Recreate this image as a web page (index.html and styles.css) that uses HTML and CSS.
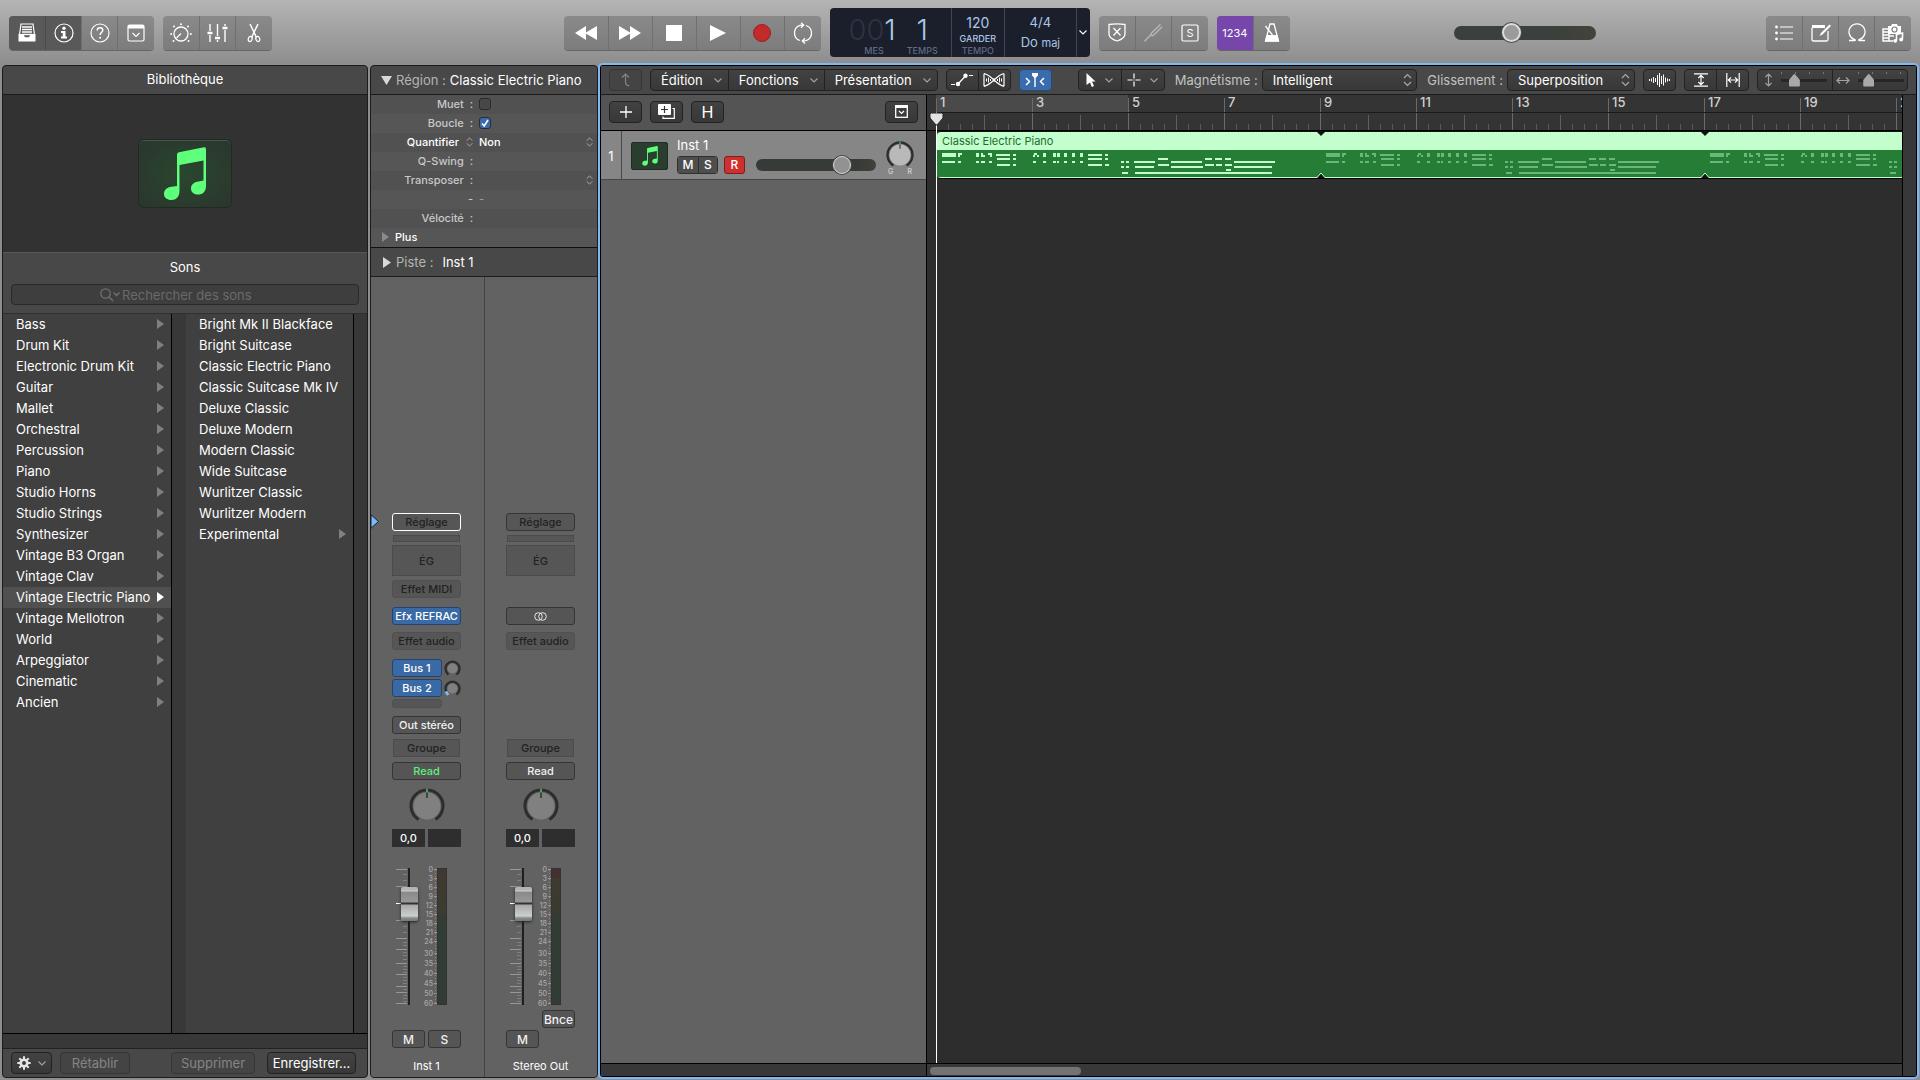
FILE: index.html
```html
<!DOCTYPE html>
<html lang="fr">
<head>
  <meta charset="UTF-8" />
  <meta name="viewport" content="width=device-width, initial-scale=1" />
  <title>Inst 1 – Pistes</title>
  <link rel="stylesheet" href="styles.css">
</head>
<body>

  <!-- shared shapes -->
  <svg class="defs" aria-hidden="true">
    <symbol id="chevron" viewBox="0 0 8 5"><path d="M.5.5 4 4 7.5.5" fill="none" stroke="currentColor" stroke-width="1.1"/></symbol>
    <symbol id="stepper" viewBox="0 0 7 10"><path d="M.7 3.7 3.5.9l2.8 2.8M.7 6.3l2.8 2.8 2.8-2.8" fill="none" stroke="currentColor"/></symbol>
    <symbol id="arrow" viewBox="0 0 7 10"><path d="M0 0 7 5 0 10z" fill="currentColor"/></symbol>
    <symbol id="note" viewBox="0 0 42 54">
      <path d="M13 7.500Q13 5.500 15 5.200L40 .3Q42 0 42 2V39C42 45 38.500 47.500 34 47.500 29.500 47.500 27 45 27 41.500 27 37.500 30 35 34.500 34.500L39.500 33.500V13.500L15.500 18V44C15.500 50 12 53 7.500 53 3 53 0 50.500 0 47 0 43 3 40.300 7.500 39.800L13 39z" fill="#5dff7b"/>
    </symbol>
    <symbol id="pan" viewBox="0 0 36 36">
      <path d="M9.500 31.500A16 16 0 1 1 26.500 31.500" fill="none" stroke="#2d2d2d" stroke-width="3"/>
      <circle cx="18" cy="18" r="13.500" fill="var(--cap)"/>
      <path d="M18 .5v4" stroke="#4fc565" stroke-width="1.500"/><path d="M18 4.500V10" stroke="#1c1c1c" stroke-width="1.200"/>
    </symbol>
    <symbol id="send" viewBox="0 0 17 17">
      <path d="M4.500 14.400A7 7 0 1 1 12.500 14.400" fill="none" stroke="#2d2d2d" stroke-width="2.400"/>
      <circle cx="8.500" cy="8.500" r="5" fill="#808080"/>
    </symbol>
    <symbol id="fader-scale" viewBox="0 0 69 138">
      <g stroke="#979797">
        <path d="M4 1.500h11M4 18.500h11M4 52.500h11M4 70.500h11M4 81.500h11M4 95.500h11M4 106.500h11M4 118.500h11M4 124.500h11M4 135.500h11"/>
        <path d="M11 6.500h4M11 12.500h4M11 24.500h4M11 30.500h4M11 42.500h4M11 47.500h4M11 58.500h4M11 64.500h4M11 74.500h4M11 77.500h4M11 84.500h4M11 87.500h4M11 91.500h4M11 98.500h4M11 101.500h4M11 104.500h4M11 109.500h4M11 112.500h4M11 115.500h4M11 121.500h4M11 127.500h4M11 130.500h4M11 133.500h4" stroke="#808080"/>
        <path d="M42 1.500h3M42 10.500h3M42 19.500h3M42 28.500h3M42 37.500h3M42 46.500h3M42 55.500h3M42 64.500h3M42 73.500h3M42 85.500h3M42 95.500h3M42 105.500h3M42 115.500h3M42 125.500h3M42 135.500h3"/>
        <path d="M43.500 2V136" stroke-dasharray="1 2" stroke="#8a8a8a"/>
      </g>
      <path d="M4 35.500h6" stroke="#fff"/>
      <rect x="16" width="2" height="137" fill="#1f1f1f"/>
    </symbol>
    <symbol id="midi" viewBox="0 0 384 27" overflow="visible">
      <path d="M5 3h14v4H5zM21 3h4v2h-2v2h-2zM5 11h13v2H5zM21 11h3v2h-3z
        M39 3h3v4h-3zM44 3h2v2h2v2h-4zM51 3h4v4h-2V5h-2zM39 11h3v2h-3zM44 11h4v2h-4zM52 11h3v2h-3z
        M59 4h14v2H59zM76 4h3v2h-3zM60 8h13v2H60zM76 8h3v2h-3zM60 14h13v2H60zM76 14h3v2h-3z
        M97 3h3v2h2v2h-2V5h-2v2h-2V5h1zM106 3h3v4h-3zM96 11h3v2h-3zM106 11h3v2h-3z
        M116 3h3v4h-3zM120 3h3v4h-3zM127 3h3v4h-3zM135 3h3v4h-3zM143 3h3v4h-3z
        M116 11h3v2h-3zM120 11h2v2h-2zM127 11h3v2h-3zM135 11h3v2h-3zM143 11h3v2h-3z
        M151 4h14v2h-14zM168 4h3v2h-3zM151 8h14v2h-14zM168 8h3v2h-3zM151 14h14v2h-14zM168 14h4v2h-4z
        M184 11h3v2h-3zM189 11h3v2h-3zM184 16h3v2h-3zM189 16h3v2h-3zM185 22h6v2h-6z
        M197 11h21v2h-21zM198 16h19v2h-19zM221 8h10v2h-10zM221 14h11v2h-11zM234 11h31v2h-31zM234 16h32v2h-32z
        M198 22h137v2H198zM268 8h7v2h-7zM278 8h7v2h-7zM288 8h6v2h-6zM268 14h9v2h-9zM279 14h6v2h-6zM288 14h7v2h-7z
        M289 19h5v2h-5zM297 11h41v2h-41zM297 16h38v2h-38z" fill="currentColor"/>
    </symbol>
  </svg>

  <header class="control-bar">
    <div class="group">
      <button class="on" aria-label="Bibliothèque"><svg width="18" height="20" viewBox="0 0 18 20"><path d="M3 1h12l1.500 11H13l-1 3H6l-1-3H1.500z" fill="none" stroke="#fff" stroke-width="1.200"/><path d="M4 4h10M4 6.500h10M4 9h10M4 11.500h10" stroke="#fff" stroke-width="1.300"/><path d="M.5 11h4.800l1.700 3.500h4L12.700 11h4.800v7.500h-17z" fill="#fff"/></svg></button>
      <button class="on" aria-label="Informations"><svg width="20" height="20" viewBox="0 0 20 20"><circle cx="10" cy="10" r="9" fill="none" stroke="#fff" stroke-width="1.200"/><circle cx="10" cy="5.200" r="1.700" fill="#fff"/><path d="M7 8h4.500v5.500H13v2H7v-2h1.700V10H7z" fill="#fff"/></svg></button>
      <button aria-label="Aide"><svg width="20" height="20" viewBox="0 0 20 20"><circle cx="10" cy="10" r="9" fill="none" stroke="#fff" stroke-width="1.200"/><path d="M7.200 7.500c0-1.800 1.300-2.700 2.800-2.700s2.800.9 2.800 2.500c0 2-2.700 2.200-2.700 4.700" fill="none" stroke="#fff" stroke-width="1.400"/><circle cx="10.100" cy="14.700" r="1" fill="#fff"/></svg></button>
      <button aria-label="Barre d’outils"><svg width="18" height="18" viewBox="0 0 18 18"><rect x="1" y="1" width="16" height="16" rx="1.500" fill="none" stroke="#fff" stroke-width="1.200"/><path d="M1 1h16v3.500H1z" fill="#fff"/><path d="m5.500 9 3.500 3.500L12.500 9" fill="none" stroke="#fff" stroke-width="1.200"/></svg></button>
    </div>
    <div class="group">
      <button aria-label="Smart Controls"><svg width="22" height="20" viewBox="0 0 22 20"><circle cx="11" cy="11" r="7" fill="none" stroke="#fff" stroke-width="1.300"/><path d="m6.500 15 4.500-4.500" stroke="#fff" stroke-width="1.300"/><g fill="#fff"><circle cx="11" cy="1.200" r="1"/><circle cx="4" cy="3.500" r="1"/><circle cx="18" cy="3.500" r="1"/><circle cx="1.200" cy="11" r="1"/><circle cx="20.800" cy="11" r="1"/><circle cx="3.500" cy="18" r="1"/><circle cx="18.500" cy="18" r="1"/></g></svg></button>
      <button aria-label="Table de mixage"><svg width="21" height="20" viewBox="0 0 21 20"><path d="M3 1v7M3 12v7M10.500 1v12M10.500 17v2M18 1v2M18 7v12" stroke="#fff" stroke-width="1.400"/><path d="M.5 10h5M8 15h5M15.500 5h5" stroke="#fff" stroke-width="2.400"/></svg></button>
      <button aria-label="Éditeurs"><svg width="14" height="20" viewBox="0 0 14 20"><path d="M3 1l6.500 13.500M11 1 4.500 14.500" stroke="#fff" stroke-width="1.500"/><ellipse cx="3.200" cy="16" rx="1.900" ry="2.600" fill="none" stroke="#fff" stroke-width="1.300" transform="rotate(20 3.200 16)"/><ellipse cx="10.800" cy="16" rx="1.900" ry="2.600" fill="none" stroke="#fff" stroke-width="1.300" transform="rotate(-20 10.800 16)"/></svg></button>
    </div>

    <span class="space-wide"></span>

    <div class="group transport">
      <button aria-label="Retour rapide"><svg width="22" height="14" viewBox="0 0 22 14"><path d="M11 0v14L0 7zM22 0v14L10 7z" fill="#fff"/></svg></button>
      <button aria-label="Avance rapide"><svg width="22" height="14" viewBox="0 0 22 14"><path d="M0 0v14l12-7zM11 0v14l11-7z" fill="#fff"/></svg></button>
      <button aria-label="Arrêt"><svg width="16" height="16"><rect width="16" height="16" fill="#fff"/></svg></button>
      <button aria-label="Lecture"><svg width="16" height="16" viewBox="0 0 16 16"><path d="M0 0v16l16-8z" fill="#fff"/></svg></button>
      <button aria-label="Enregistrement"><svg width="18" height="18"><circle cx="9" cy="9" r="8.500" fill="#c22a2b" stroke="#9d2021"/></svg></button>
      <button aria-label="Boucle"><svg width="22" height="22" viewBox="0 0 22 22"><path d="M8 18.500A8 8 0 0 1 8 3.300l3.500-.3M14 3.500A8 8 0 0 1 14 18.700l-3.500.3M9 .7 11.700 3 9 5.700M13 16.300 10.300 19l2.700 2.500" fill="none" stroke="#fff" stroke-width="1.300"/></svg></button>
    </div>

    <div class="lcd">
      <div class="lcd-position">
        <div class="lcd-cell"><b><i>00</i>1</b><small>MES</small></div>
        <div class="lcd-cell"><b>1</b><small>TEMPS</small></div>
      </div>
      <div class="lcd-tempo"><span>120</span><em>GARDER</em><small>TEMPO</small></div>
      <div class="lcd-sign"><span>4/4</span><span>Do <em>maj</em></span></div>
      <button class="lcd-menu" aria-label="Affichage"><svg width="8" height="5"><use href="#chevron"/></svg></button>
    </div>

    <div class="group">
      <button aria-label="Remplacer"><svg width="18" height="19" viewBox="0 0 18 19"><path d="M1 1.500Q9 .3 17 1.500V11q0 4.500-8 7-8-2.500-8-7z" fill="none" stroke="#fff" stroke-width="1.300"/><path d="m5.500 5 7 7.500M12.500 5l-7 7.500" stroke="#fff" stroke-width="1.300"/></svg></button>
      <button class="dim" aria-label="Accordeur"><svg width="20" height="20" viewBox="0 0 20 20"><path d="m1.500 18.500 6.500-7M17.500 1.500 9.500 9q-2.500 2.500-1 3.500t3-1.300L19 4" fill="none" stroke="#fff" stroke-width="1.500"/></svg></button>
      <button aria-label="Solo"><svg width="18" height="18" viewBox="0 0 18 18"><rect x="1" y="1" width="16" height="16" rx="1.500" fill="none" stroke="#fff" stroke-width="1.200"/><text x="9" y="13" text-anchor="middle" fill="#fff" font-size="11">S</text></svg></button>
    </div>
    <div class="group">
      <button class="count-in">1234</button>
      <button aria-label="Métronome"><svg width="16" height="19" viewBox="0 0 16 19"><path d="M6 1h4l4.500 17h-13z" fill="none" stroke="#fff" stroke-width="1.300"/><path d="M2.500 12h11L15 18.500H1z" fill="#fff"/><path d="M8.500 12 1.500 3" stroke="#fff" stroke-width="1.300"/></svg></button>
    </div>

    <span class="space"></span>
    <input class="master" type="range" min="0" max="100" value="39" aria-label="Volume principal">
    <span class="space"></span>

    <div class="group">
      <button aria-label="Listes"><svg width="18" height="16" viewBox="0 0 18 16"><path d="M5 2h13M5 8h13M5 14h13" stroke="#fff" stroke-width="1.200"/><g fill="#fff"><circle cx="1.500" cy="2" r="1.400"/><circle cx="1.500" cy="8" r="1.400"/><circle cx="1.500" cy="14" r="1.400"/></g></svg></button>
      <button aria-label="Bloc-notes"><svg width="20" height="19" viewBox="0 0 20 19"><path d="M17 8v8.500q0 1.500-1.500 1.500h-13Q1 18 1 16.500v-12" fill="none" stroke="#fff" stroke-width="1.300"/><path d="M1 2h13v3H1z" fill="#fff"/><path d="M18.500 1.500 10 10l-1.500 3 3-1.500L20 3z" fill="#fff"/></svg></button>
      <button aria-label="Boucles"><svg width="18" height="19" viewBox="0 0 18 19"><path d="M1 17.500h5.500q1.500 0 .3-1A8 8 0 1 1 11.200 16.500q-1.200 1 .3 1H17" fill="none" stroke="#fff" stroke-width="1.300"/></svg></button>
      <button aria-label="Navigateur"><svg width="22" height="20" viewBox="0 0 22 20"><path d="M1 6h6v12H1zM1 9h6M1 12h6M1 15h6M4 18h7M7 13h5" fill="none" stroke="#fff" stroke-width="1.400"/><path d="M6 3h3l1-2h5l1 2h3v8H6z" fill="#fff"/><circle cx="12.500" cy="6.500" r="2.500" fill="none" stroke="#808080" stroke-width="1.200"/><path d="M14.500 17.500v-6l6-1.500v6" fill="none" stroke="#fff" stroke-width="1.600"/><circle cx="13.200" cy="17.800" r="1.900" fill="#fff"/><circle cx="19.200" cy="16.500" r="1.900" fill="#fff"/></svg></button>
    </div>
  </header>

  <main class="workspace">

    <section class="panel library">
      <h2>Bibliothèque</h2>
      <div class="preview"><div class="patch-icon"><svg width="42" height="54"><use href="#note"/></svg></div></div>
      <div class="sounds">
        <h3>Sons</h3>
        <label class="search">
          <svg width="20" height="14" viewBox="0 0 20 14"><circle cx="5.500" cy="5.500" r="4.700" fill="none" stroke="currentColor" stroke-width="1.200"/><path d="m9 9 4 4M13.500 4.500 16.500 7.500l3-3" fill="none" stroke="currentColor" stroke-width="1.300"/></svg>
          <input type="text" placeholder="Rechercher des sons" aria-label="Rechercher des sons">
        </label>
      </div>
      <div class="browser">
        <ul>
          <li><button>Bass<svg width="7" height="10"><use href="#arrow"/></svg></button></li>
          <li><button>Drum Kit<svg width="7" height="10"><use href="#arrow"/></svg></button></li>
          <li><button>Electronic Drum Kit<svg width="7" height="10"><use href="#arrow"/></svg></button></li>
          <li><button>Guitar<svg width="7" height="10"><use href="#arrow"/></svg></button></li>
          <li><button>Mallet<svg width="7" height="10"><use href="#arrow"/></svg></button></li>
          <li><button>Orchestral<svg width="7" height="10"><use href="#arrow"/></svg></button></li>
          <li><button>Percussion<svg width="7" height="10"><use href="#arrow"/></svg></button></li>
          <li><button>Piano<svg width="7" height="10"><use href="#arrow"/></svg></button></li>
          <li><button>Studio Horns<svg width="7" height="10"><use href="#arrow"/></svg></button></li>
          <li><button>Studio Strings<svg width="7" height="10"><use href="#arrow"/></svg></button></li>
          <li><button>Synthesizer<svg width="7" height="10"><use href="#arrow"/></svg></button></li>
          <li><button>Vintage B3 Organ<svg width="7" height="10"><use href="#arrow"/></svg></button></li>
          <li><button>Vintage Clav<svg width="7" height="10"><use href="#arrow"/></svg></button></li>
          <li><button class="selected">Vintage Electric Piano<svg width="7" height="10"><use href="#arrow"/></svg></button></li>
          <li><button>Vintage Mellotron<svg width="7" height="10"><use href="#arrow"/></svg></button></li>
          <li><button>World<svg width="7" height="10"><use href="#arrow"/></svg></button></li>
          <li><button>Arpeggiator<svg width="7" height="10"><use href="#arrow"/></svg></button></li>
          <li><button>Cinematic<svg width="7" height="10"><use href="#arrow"/></svg></button></li>
          <li><button>Ancien<svg width="7" height="10"><use href="#arrow"/></svg></button></li>
        </ul>
        <div class="gutter"></div>
        <ul>
          <li><button>Bright Mk II Blackface</button></li>
          <li><button>Bright Suitcase</button></li>
          <li><button>Classic Electric Piano</button></li>
          <li><button>Classic Suitcase Mk IV</button></li>
          <li><button>Deluxe Classic</button></li>
          <li><button>Deluxe Modern</button></li>
          <li><button>Modern Classic</button></li>
          <li><button>Wide Suitcase</button></li>
          <li><button>Wurlitzer Classic</button></li>
          <li><button>Wurlitzer Modern</button></li>
          <li><button>Experimental<svg width="7" height="10"><use href="#arrow"/></svg></button></li>
        </ul>
        <div class="gutter"></div>
      </div>
      <div class="browser-scroll"></div>
      <footer class="library-footer">
        <button class="btn gear" aria-label="Actions">
          <svg width="14" height="14" viewBox="-7 -7 14 14"><circle r="3.300" fill="none" stroke="#e4e4e4" stroke-width="2.600"/><path d="M0-6.700V-4M0 4v2.700M-6.700 0H-4M4 0h2.700M-4.700-4.700l2 2M2.700 2.700l2 2M-4.700 4.700l2-2M2.700-2.700l2-2" stroke="#e4e4e4" stroke-width="2"/></svg>
          <svg width="8" height="5"><use href="#chevron"/></svg>
        </button>
        <button class="btn revert" disabled>Rétablir</button>
        <button class="btn delete" disabled>Supprimer</button>
        <button class="btn save">Enregistrer…</button>
      </footer>
    </section>

    <section class="panel inspector">
      <h2><svg width="11" height="9" viewBox="0 0 11 9"><path d="M0 0h11L5.500 9z" fill="#d8d8d8"/></svg><span>Région :</span> Classic Electric Piano</h2>
      <div class="params">
        <div class="param"><label for="muet">Muet &nbsp;:</label><input type="checkbox" id="muet"></div>
        <div class="param"><label for="boucle">Boucle &nbsp;:</label><input type="checkbox" id="boucle" checked></div>
        <div class="param strong"><label for="quant">Quantifier<svg width="7" height="10"><use href="#stepper"/></svg></label><select id="quant"><option>Non</option></select></div>
        <div class="param"><span>Q-Swing &nbsp;:</span></div>
        <div class="param"><label for="transp">Transposer &nbsp;:</label><select id="transp"><option></option></select></div>
        <div class="param"><span>-</span><span class="value">-</span></div>
        <div class="param"><span>Vélocité &nbsp;:</span></div>
        <button class="more"><svg width="7" height="10"><use href="#arrow"/></svg>Plus</button>
      </div>
      <h2 class="track-title"><svg width="8" height="11" viewBox="0 0 8 11"><path d="M0 0 8 5.500 0 11z" fill="#d8d8d8"/></svg><span>Piste :</span> Inst 1</h2>

      <div class="mixer">
        <div class="channel">
          <svg class="pointer" width="9" height="15" viewBox="0 0 9 15"><path d="M0 .8 7.500 7.500 0 14.200z" fill="#7cbaff" stroke="#1c1c1c"/></svg>
          <button class="slot setting active">Réglage</button>
          <div class="slot gain"></div>
          <button class="slot eq">ÉG</button>
          <button class="slot faint midi-fx">Effet MIDI</button>
          <button class="slot blue insert">Efx REFRAC</button>
          <button class="slot faint audio-fx">Effet audio</button>
          <div class="send send-1"><button class="slot blue">Bus 1</button><svg width="17" height="17"><use href="#send"/></svg></div>
          <div class="send send-2"><button class="slot blue">Bus 2</button><svg width="17" height="17" viewBox="0 0 17 17"><use href="#send"/><path d="m1.800 11.500 2.500 3.500" stroke="#7cbaff" stroke-width="3"/></svg></div>
          <button class="slot faint send-empty" aria-label="Envoi"></button>
          <button class="slot live output">Out stéréo</button>
          <button class="slot flat group-slot">Groupe</button>
          <button class="slot live read green">Read</button>
          <svg class="pan" width="36" height="36"><use href="#pan"/></svg>
          <div class="levels"><output>0,0</output><output></output></div>
          <div class="fader">
            <svg width="69" height="140" viewBox="0 0 69 140">
              <use href="#fader-scale" width="69" height="138"/>
              <g class="scale-text">
                <text x="41" y="4">0</text><text x="41" y="13">3</text><text x="41" y="22">6</text><text x="41" y="31">9</text>
                <text x="41" y="40">12</text><text x="41" y="49">15</text><text x="41" y="58">18</text><text x="41" y="67">21</text>
                <text x="41" y="76">24</text><text x="41" y="88">30</text><text x="41" y="98">35</text><text x="41" y="108">40</text>
                <text x="41" y="118">45</text><text x="41" y="128">50</text><text x="41" y="138">60</text>
              </g>
            </svg>
            <input type="range" aria-label="Volume Inst 1" min="0" max="100" value="82">
            <div class="meter"></div>
          </div>
          <div class="ms"><button class="slot live">M</button><button class="slot live">S</button></div>
          <div class="channel-name">Inst 1</div>
        </div>
        <div class="channel">
          <button class="slot setting">Réglage</button>
          <div class="slot gain"></div>
          <button class="slot eq">ÉG</button>
          <button class="slot live insert" aria-label="Stéréo"><svg width="13" height="9" viewBox="0 0 13 9"><circle cx="4.500" cy="4.500" r="3.800" fill="none" stroke="#e6e6e6"/><circle cx="8.500" cy="4.500" r="3.800" fill="none" stroke="#e6e6e6"/></svg></button>
          <button class="slot faint audio-fx">Effet audio</button>
          <button class="slot flat group-slot">Groupe</button>
          <button class="slot live read">Read</button>
          <svg class="pan" width="36" height="36"><use href="#pan"/></svg>
          <div class="levels"><output>0,0</output><output></output></div>
          <div class="fader">
            <svg width="69" height="140" viewBox="0 0 69 140">
              <use href="#fader-scale" width="69" height="138"/>
              <g class="scale-text">
                <text x="41" y="4">0</text><text x="41" y="13">3</text><text x="41" y="22">6</text><text x="41" y="31">9</text>
                <text x="41" y="40">12</text><text x="41" y="49">15</text><text x="41" y="58">18</text><text x="41" y="67">21</text>
                <text x="41" y="76">24</text><text x="41" y="88">30</text><text x="41" y="98">35</text><text x="41" y="108">40</text>
                <text x="41" y="118">45</text><text x="41" y="128">50</text><text x="41" y="138">60</text>
              </g>
            </svg>
            <input type="range" aria-label="Volume Stereo Out" min="0" max="100" value="82">
            <div class="meter clip"></div>
          </div>
          <button class="slot live bounce">Bnce</button>
          <div class="ms"><button class="slot live">M</button></div>
          <div class="channel-name">Stereo Out</div>
        </div>
      </div>
    </section>

    <section class="arrange">
      <div class="arrange-bar">
        <button class="btn up" aria-label="Remonter" disabled><svg width="10" height="14" viewBox="0 0 10 14"><path d="M1 4.500 4.500 1 8 4.500M4.500 1v8q0 3.500 4 4" fill="none" stroke="currentColor" stroke-width="1.200"/></svg></button>
        <div class="btn-row menus">
          <button class="btn">Édition<svg width="8" height="5"><use href="#chevron"/></svg></button>
          <button class="btn">Fonctions<svg width="8" height="5"><use href="#chevron"/></svg></button>
          <button class="btn">Présentation<svg width="8" height="5"><use href="#chevron"/></svg></button>
        </div>
        <div class="btn-row">
          <button class="btn icon" aria-label="Automation"><svg width="22" height="14" viewBox="0 0 22 14"><path d="M0 11.500h4M18 2.500h4M7 11 14.500 3" stroke="#fff" stroke-width="1.200"/><circle cx="7" cy="11" r="2.200" fill="#fff"/><circle cx="14.500" cy="2.800" r="2.200" fill="#fff"/></svg></button>
          <button class="btn icon" aria-label="Flex"><svg width="22" height="14" viewBox="0 0 22 14"><path d="M1 .7v12.600M21 .7v12.600M1 .7C9 2 13 12 21 13.300M21 .7C13 2 9 12 1 13.300" fill="none" stroke="#fff" stroke-width="1.200"/><path d="M3.500 5.500v3M5.500 4.500v5M7.500 6v2M14.500 6v2M16.500 4.500v5M18.500 5.500v3M11 5v4" stroke="#fff"/></svg></button>
        </div>
        <button class="btn icon lit" aria-label="Catch"><svg width="20" height="14" viewBox="0 0 20 14"><path d="M7 0h6v2.500L10.700 5V14H9.300V5L7 2.500z" fill="#fff"/><path d="m1 5 3.500 3.500L1 12M19 5l-3.500 3.500L19 12" fill="none" stroke="#fff" stroke-width="1.500"/></svg></button>
        <div class="btn-row tools">
          <button class="btn" aria-label="Pointeur"><svg width="10" height="14" viewBox="0 0 10 14"><path d="M.5 0 9.500 8.500H6l2 4.500-2.200 1L4 9.500 .5 12z" fill="#fff"/></svg><svg width="8" height="5"><use href="#chevron"/></svg></button>
          <button class="btn" aria-label="Marquee"><svg width="14" height="14" viewBox="0 0 14 14"><path d="M7 .5v5M7 8.500v5M.5 7h5M8.500 7h5" stroke="#fff" stroke-width="1.200"/><path d="M7 6.500v1" stroke="#fff"/></svg><svg width="8" height="5"><use href="#chevron"/></svg></button>
        </div>
        <label class="snap" for="snap">Magnétisme :</label>
        <select class="btn snap-select" id="snap"><option>Intelligent</option></select>
        <label class="snap" for="drag">Glissement :</label>
        <select class="btn drag-select" id="drag"><option>Superposition</option></select>
        <span class="bar-end"></span>
        <button class="btn icon" aria-label="Zoom onde"><svg width="22" height="14" viewBox="0 0 22 14"><path d="M.5 6v2M2.500 5.500v3M4.500 4v6M6.500 5v4M8.500 2v10M10.500 0v14M12.500 3v8M14.500 1.500v11M16.500 4.500v5M18.500 5.500v3M20.500 6v2" stroke="#fff"/></svg></button>
        <div class="btn-row">
          <button class="btn icon" aria-label="Zoom vertical"><svg width="14" height="14" viewBox="0 0 14 14"><path d="M0 .8h14M0 13.200h14M7 2.500v9M4.300 5 7 2.300 9.700 5M4.300 9 7 11.700 9.700 9" fill="none" stroke="#fff" stroke-width="1.200"/></svg></button>
          <button class="btn icon" aria-label="Zoom horizontal"><svg width="14" height="14" viewBox="0 0 14 14"><path d="M.8 0v14M13.200 0v14M2.500 7h9M5 4.300 2.300 7 5 9.700M9 4.300 11.700 7 9 9.700" fill="none" stroke="#fff" stroke-width="1.200"/></svg></button>
        </div>
        <div class="btn-row zooms">
          <label class="btn"><svg width="9" height="14" viewBox="0 0 9 14"><path d="M4.500 1v12M1.500 4 4.500 1l3 3M1.500 10l3 3 3-3" fill="none" stroke="currentColor" stroke-width="1.200"/></svg><input type="range" aria-label="Zoom vertical" min="0" max="100" value="24"></label>
          <label class="btn"><svg width="14" height="9" viewBox="0 0 14 9"><path d="M1 4.500h12M4 1.500 1 4.500l3 3M10 1.500l3 3-3 3" fill="none" stroke="currentColor" stroke-width="1.200"/></svg><input type="range" aria-label="Zoom horizontal" min="0" max="100" value="15"></label>
        </div>
      </div>

      <div class="arrange-body">
        <div class="track-list">
          <div class="track-tools">
            <button class="btn icon" aria-label="Nouvelle piste"><svg width="12" height="12" viewBox="0 0 12 12"><path d="M6 0v12M0 6h12" stroke="#fff" stroke-width="1.300"/></svg></button>
            <button class="btn icon" aria-label="Dupliquer la piste"><svg width="17" height="15" viewBox="0 0 17 15"><rect width="13" height="11" rx="1" fill="#fff"/><path d="M6.500 2v7M3 5.500h7" stroke="#333" stroke-width="1.200"/><path d="M14.500 4.500h1.800v9.800H5V12.500" fill="none" stroke="#fff" stroke-width="1.200"/></svg></button>
            <button class="btn icon hide">H</button>
            <button class="btn icon push" aria-label="Configurer"><svg width="13" height="13" viewBox="0 0 13 13"><rect x=".7" y=".7" width="11.600" height="11.600" fill="none" stroke="#fff" stroke-width="1.300"/><path d="M0 0h13v3H0z" fill="#fff"/><path d="m4 6 2.500 2.500L9 6" fill="none" stroke="#fff" stroke-width="1.200"/></svg></button>
          </div>
          <div class="track">
            <span class="track-number">1</span>
            <div class="track-icon"><svg width="16" height="20"><use href="#note"/></svg></div>
            <div class="track-main">
              <div class="track-name">Inst 1</div>
              <div class="track-controls">
                <div class="track-ms"><button>M</button><button>S</button></div>
                <button class="rec">R</button>
                <input class="track-volume" type="range" aria-label="Volume" min="0" max="100" value="75">
              </div>
            </div>
            <div class="track-pan"><svg width="28" height="28"><use href="#pan"/></svg><span>G</span><span>R</span></div>
          </div>
          <div class="list-foot"></div>
        </div>

        <div class="timeline">
          <div class="ruler">
            <div class="bars"><span class="cycle">1</span><span class="cycle">3</span><span>5</span><span>7</span><span>9</span><span>11</span><span>13</span><span>15</span><span>17</span><span>19</span><span>21</span></div>
            <div class="ticks"></div>
          </div>
          <div class="lane">
            <div class="region">
              <div class="region-name">Classic Electric Piano</div>
              <svg class="region-midi" height="27">
                <use href="#midi" width="384" height="27" class="first"/>
                <use href="#midi" x="384" width="384" height="27"/>
                <use href="#midi" x="768" width="384" height="27"/>
              </svg>
              <svg class="notch" width="8" height="46" viewBox="0 0 8 46"><path d="M0 0h8L4 4z" fill="#111"/><path d="M0 46 4 41.500 8 46z" fill="#111"/><path d="M0 45.500 4 41l4 4.500" fill="none" stroke="#c3ffcd"/></svg>
              <svg class="notch second" width="8" height="46" viewBox="0 0 8 46"><path d="M0 0h8L4 4z" fill="#111"/><path d="M0 46 4 41.500 8 46z" fill="#111"/><path d="M0 45.500 4 41l4 4.500" fill="none" stroke="#c3ffcd"/></svg>
            </div>
          </div>
          <div class="playhead"><svg width="15" height="14" viewBox="0 0 15 14"><path d="M1 2.500Q1 1 2.500 1h10Q14 1 14 2.500V6L8 13H7L1 6z" fill="#e2e2e2" stroke="#222"/></svg></div>
          <div class="h-scroll"><div class="h-thumb"></div></div>
        </div>
        <div class="v-scroll"></div>
      </div>
    </section>
  </main>

</body>
</html>
```
FILE: styles.css
```css
* {
  box-sizing: border-box;
}

body {
  margin: 0;
  height: 100vh;
  display: flex;
  flex-direction: column;
  overflow: hidden;
  background: #8e8e8e;
  color: #fff;
  font-family: Inter, "Liberation Sans", sans-serif;
  font-size: 13px;
}

button, input, select {
  margin: 0;
  padding: 0;
  border: 0;
  background: none;
  color: inherit;
  font: inherit;
}

input[type="range"],
input[type="checkbox"],
select {
  appearance: none;
}

svg {
  display: block;
  flex: none;
}

h2, h3, ul {
  margin: 0;
  padding: 0;
  font-size: inherit;
  font-weight: inherit;
  list-style: none;
}

.defs {
  position: absolute;
  width: 0;
  height: 0;
}

/* control bar */

.control-bar {
  flex: none;
  display: flex;
  align-items: center;
  gap: 9px;
  height: 63px;
  padding: 2px 9px 0;
  background: linear-gradient(#b4b4b4, #8e8e8e);
}

.group {
  display: flex;
  height: 34px;
  border-radius: 4px;
  overflow: hidden;
  background: linear-gradient(#8a8a8a, #7c7c7c);
  box-shadow: 0 1px 0 #656565;
}

.group button {
  width: 36px;
  display: flex;
  align-items: center;
  justify-content: center;
  border-left: 1px solid #707070;
}

.group button:first-child {
  border-left: 0;
}

.group button:last-child {
  width: 37px;
}

.group .on {
  background: #595959;
  border-color: #4b4b4b;
}

.group .dim svg {
  opacity: .4;
}

.group .count-in {
  background: #7646ab;
  font-size: 11px;
}

.group.transport button {
  width: 44px;
}

.group.transport button:last-child {
  width: 37px;
}

.space-wide {
  flex: 45;
}

.space {
  flex: 24;
}

.master + .space {
  flex: 25;
}

.lcd {
  display: flex;
  height: 49px;
  width: 260px;
  border-radius: 4px;
  background: #1b1e2b;
  color: #abc8e8;
}

.lcd > * {
  border-left: 1px solid #3d4559;
}

.lcd small {
  color: #5d6b85;
  font-size: 9px;
  font-weight: 500;
  line-height: 10px;
}

.lcd em {
  font-style: normal;
}

.lcd .lcd-position {
  width: 121px;
  display: flex;
  justify-content: flex-end;
  gap: 11px;
  padding: 6px 13px 0 0;
  border: 0;
}

.lcd-cell {
  display: flex;
  flex-direction: column;
  align-items: flex-end;
}

.lcd-cell b {
  font-size: 29px;
  font-weight: 300;
  line-height: 32px;
}

.lcd-cell:last-child {
  align-items: center;
}

.lcd-cell i {
  font-style: normal;
  color: #2e3342;
}

.lcd-cell small {
  padding-right: 12px;
}

.lcd-cell:last-child small {
  padding: 0;
}

.lcd-tempo {
  width: 53px;
  display: flex;
  flex-direction: column;
  align-items: center;
  padding-top: 6px;
}

.lcd-tempo span {
  font-size: 14px;
  line-height: 17px;
}

.lcd-tempo em {
  font-size: 9px;
  font-weight: 500;
  line-height: 15px;
}

.lcd-sign {
  width: 72px;
  display: flex;
  flex-direction: column;
  align-items: center;
  padding-top: 4px;
  line-height: 20px;
}

.lcd-sign em {
  font-size: 11px;
}

.lcd-menu {
  flex: 1;
  display: flex;
  align-items: center;
  justify-content: center;
  color: #fff;
}

.master {
  width: 142px;
  height: 14px;
  border-radius: 7px;
  background: linear-gradient(90deg, #3a403b 70%, #45423a);
}

.master::-webkit-slider-thumb {
  appearance: none;
  width: 19px;
  height: 19px;
  border: 2px solid #dcdcdc;
  border-radius: 50%;
  background: #9b9b9b;
  box-shadow: 0 0 0 1px #4d4d4d;
}

/* panels */

.workspace {
  flex: 1;
  min-height: 0;
  display: grid;
  grid-template-columns: 366px 230px 1fr;
  padding: 0 1px 1px 2px;
}

.panel {
  display: flex;
  flex-direction: column;
  margin: 2px 0 1px;
  border: 1px solid #1c1c1c;
  border-radius: 4px;
  overflow: hidden;
  background: #484848;
}

.panel h2 {
  flex: none;
  height: 29px;
  line-height: 27px;
  border-bottom: 1px solid #1c1c1c;
}

.btn {
  display: flex;
  align-items: center;
  justify-content: center;
  height: 22px;
  border: 1px solid #222;
  border-radius: 4px;
  background: linear-gradient(#424242, #383838);
  color: #fff;
}

.btn use {
  color: #a2a2a2;
}

.btn:disabled {
  color: #858585;
  border-color: #353535;
  background: #444;
}

/* library */

.library h2,
.library h3 {
  text-align: center;
}

.preview {
  flex: none;
  height: 157px;
  display: flex;
  align-items: center;
  justify-content: center;
  background: #323232;
}

.patch-icon {
  width: 94px;
  height: 69px;
  display: flex;
  align-items: center;
  justify-content: center;
  border: 1px solid #202a22;
  border-radius: 6px;
  background: radial-gradient(#29472f, #2b352d);
  box-shadow: inset 0 1px 0 #44594a;
}

.sounds {
  flex: none;
  height: 62px;
  padding: 0 8px;
  border-top: 1px solid #575757;
  border-bottom: 1px solid #303030;
}

.sounds h3 {
  line-height: 29px;
}

.search {
  height: 21px;
  margin-top: 2px;
  display: flex;
  align-items: center;
  justify-content: center;
  gap: 2px;
  border: 1px solid #292929;
  border-radius: 4px;
  background: #3e3e3e;
  color: #727272;
}

.search input {
  width: 148px;
}

.search input::placeholder {
  color: #6a6a6a;
}

.browser {
  flex: 1;
  display: flex;
  background: #404040;
}

.browser ul {
  flex: none;
  width: 168px;
}

.browser .gutter + ul {
  width: 167px;
}

.browser ul button {
  width: 100%;
  height: 21px;
  padding: 0 7px 1px 13px;
  display: flex;
  align-items: center;
  justify-content: space-between;
  text-align: left;
}

.browser li svg {
  color: #808080;
}

.browser ul .selected {
  background: #505050;
}

.browser .selected svg {
  color: #fff;
}

.gutter {
  flex: none;
  width: 15px;
  border-left: 1px solid #000;
  background: #383838;
}

.gutter:last-child {
  flex: 1;
}

.browser-scroll {
  height: 16px;
  border-top: 1px solid #000;
  border-bottom: 1px solid #222;
  background: #383838;
}

.library-footer {
  flex: none;
  display: flex;
  height: 28px;
  padding: 3px 11px 0 8px;
}

.gear {
  width: 41px;
  gap: 7px;
}

.revert {
  width: 70px;
  margin-left: 8px;
}

.delete {
  width: 84px;
  margin-left: auto;
}

.save {
  width: 89px;
  margin-left: 12px;
}

/* inspector */

.inspector {
  margin-left: 2px;
}

.inspector h2 {
  display: flex;
  align-items: center;
  gap: 4px;
  padding-left: 10px;
  white-space: nowrap;
}

.inspector h2 span {
  color: #b4b4b4;
}

.inspector .track-title {
  gap: 5px;
  padding-left: 12px;
  border-top: 1px solid #111;
  height: 30px;
}

.track-title span {
  margin-right: 4px;
}

.params {
  font-size: 11px;
  font-weight: 500;
  background: #565656;
}

.param {
  height: 19px;
  display: grid;
  grid-template-columns: 102px 1fr;
  column-gap: 6px;
  align-items: center;
  padding: 0 4px 1px 0;
  color: #c8c8c8;
}

.param:nth-child(odd) {
  background: #515151;
}

.param > :first-child {
  display: flex;
  justify-content: flex-end;
}

.param label svg {
  margin: 2px 0 0 7px;
  color: #aaa;
}

.param.strong {
  color: #fff;
}

.param .value {
  color: #999;
}

.param input {
  width: 12px;
  height: 12px;
  border: 1px solid #2a2a2a;
  border-radius: 3px;
  background: #484848;
}

.param input:checked {
  border-color: #222c3a;
  background: #3c6ca8 url("data:image/svg+xml,%3Csvg xmlns='http://www.w3.org/2000/svg' viewBox='0 0 10 10'%3E%3Cpath d='M2 5.500 4.200 8 8 2' fill='none' stroke='%23fff' stroke-width='1.600'/%3E%3C/svg%3E");
}

.param select {
  height: 18px;
  background: url("data:image/svg+xml,%3Csvg xmlns='http://www.w3.org/2000/svg' width='7' height='10'%3E%3Cpath d='M.7 3.700 3.500.9l2.800 2.800M.7 6.300l2.800 2.800 2.800-2.800' fill='none' stroke='%23aaa'/%3E%3C/svg%3E") right center no-repeat;
}

.more {
  height: 19px;
  display: flex;
  align-items: center;
  gap: 6px;
  padding: 0 0 1px 11px;
}

.more svg {
  color: #8a8a8a;
}

/* channel strips */

.mixer {
  flex: 1;
  display: grid;
  grid-template-columns: 114px 1fr;
  background: #626262;
}

.channel {
  position: relative;
  display: grid;
  grid-template-rows: 22px 10px 35px 27px 25px 27px 20px 20px 17px 23px 23px 26px 41px 39px 142px 20px 28px 19px;
  grid-template-columns: 69px;
  align-content: end;
  align-items: start;
  padding-left: 21px;
  font-size: 11px;
  font-weight: 500;
}

.channel:first-child {
  border-right: 1px solid #434343;
}

.pointer {
  position: absolute;
  left: 0;
  bottom: 548px;
}

.slot {
  height: 18px;
  display: flex;
  align-items: center;
  justify-content: center;
  border: 1px solid #353535;
  border-radius: 3px;
  background: #565656;
  color: #222;
}

.setting { grid-row: 1; }
.gain { grid-row: 2; }
.eq { grid-row: 3; }
.midi-fx { grid-row: 4; }
.insert { grid-row: 5; }
.audio-fx { grid-row: 6; }
.send-1 { grid-row: 7; }
.send-2 { grid-row: 8; }
.send-empty { grid-row: 9; }
.output { grid-row: 10; }
.group-slot { grid-row: 11; }
.read { grid-row: 12; }
.pan { grid-row: 13; }
.levels { grid-row: 14; }
.fader { grid-row: 15; }
.bounce { grid-row: 16; }
.ms { grid-row: 17; }
.channel-name { grid-row: 18; }

.slot.active {
  border-color: #fff;
}

.slot.gain {
  height: 7px;
  margin: 0 1px;
  border-color: #4b4b4b;
  border-radius: 0;
}

.slot.eq {
  height: 31px;
  border-color: #4b4b4b;
  border-radius: 0;
}

.slot.faint {
  border-color: #505050;
}

.slot.flat {
  margin: 0 1px;
  border-color: #4b4b4b;
  border-radius: 0;
}

.slot.blue {
  border-color: #24446d;
  background: #3a6aa6;
  color: #fff;
}

.slot.live {
  background: #555;
  color: #f0f0f0;
}

.slot.green {
  color: #5ff07c;
}

.slot.send-empty {
  width: 50px;
  height: 9px;
}

.send {
  display: flex;
  align-items: center;
  justify-content: space-between;
}

.send .slot {
  width: 50px;
}

.pan {
  --cap: #808080;
  justify-self: center;
}

.levels {
  display: flex;
  gap: 3px;
}

.levels output {
  width: 33px;
  height: 18px;
  line-height: 18px;
  text-align: center;
  background: #2e2e2e;
}

.fader {
  display: grid;
  grid-template-columns: 69px;
}

.fader > * {
  grid-area: 1 / 1;
}

.fader svg {
  overflow: visible;
}

.scale-text {
  fill: #a8a8a8;
  font-size: 7px;
  text-anchor: end;
}

.fader input {
  width: 17px;
  height: 137px;
  margin-left: 9px;
  writing-mode: vertical-lr;
  direction: rtl;
}

.fader input::-webkit-slider-thumb {
  appearance: none;
  width: 17px;
  height: 34px;
  border-radius: 2px;
  background: linear-gradient(#b4b4b4 0 3px, #d0d0d0 4px, #8a8a8a 5px, #999 15px, #333 16px 17px, #a8a8a8 18px, #ccd0d2 29px, #8a8a8a 31px, #777);
  box-shadow: 0 1px 3px #222;
}

.meter {
  width: 10px;
  height: 137px;
  margin-left: 45px;
  border: 1px solid #333;
  background: linear-gradient(#403830, #3c3c30 30%, #303c34 38%);
}

.meter.clip {
  background: linear-gradient(#443030 0 9px, #403a30 10px, #3a3a30 30%, #303c34 38%);
}

.bounce {
  width: 33px;
  justify-self: end;
}

.slot.bounce,
.ms .slot {
  font-size: 12px;
}

.ms {
  display: flex;
  gap: 3px;
}

.ms .slot {
  width: 33px;
}

.channel-name {
  justify-self: center;
  line-height: 16px;
  font-weight: 400;
  white-space: nowrap;
}

/* arrange window */

.arrange {
  min-width: 0;
  display: flex;
  flex-direction: column;
  padding: 1px;
  border: 2px solid #7fb7f7;
  border-radius: 5px;
  background: #000;
  overflow: hidden;
}

.arrange-bar {
  flex: none;
  height: 29px;
  display: flex;
  align-items: center;
  gap: 8px;
  padding: 0 8px;
  border-bottom: 1px solid #1c1c1c;
  background: #484848;
  white-space: nowrap;
}

.btn.icon,
.btn.up {
  flex: none;
  width: 33px;
}

.btn-row {
  display: flex;
}

.btn-row .btn {
  border-radius: 0;
  margin-left: -1px;
}

.btn-row .btn:first-child {
  margin-left: 0;
  border-radius: 4px 0 0 4px;
}

.btn-row .btn:last-child {
  border-radius: 0 4px 4px 0;
}

.menus .btn {
  padding: 0 6px 0 10px;
  gap: 11px;
}

.btn.lit {
  background: #3a6cac;
  border-color: #274a78;
}

.tools {
  margin-left: 18px;
}

.tools .btn {
  width: 44px;
  gap: 9px;
}

.snap {
  margin: 0 -4px 0 2px;
  color: #c2c2c2;
}

select.btn {
  padding-left: 10px;
  background: url("data:image/svg+xml,%3Csvg xmlns='http://www.w3.org/2000/svg' width='9' height='14'%3E%3Cpath d='M1 5 4.500 1.500 8 5M1 9l3.500 3.500L8 9' fill='none' stroke='%23a8a8a8' stroke-width='1.200'/%3E%3C/svg%3E") right 4px center no-repeat, linear-gradient(#424242, #383838);
}

.snap-select {
  width: 158px;
}

.drag-select {
  width: 130px;
}

.bar-end {
  flex: 1;
  margin-left: -8px;
}

.zooms .btn {
  width: 76px;
  gap: 8px;
  color: #a2a2a2;
}

.zooms input {
  width: 46px;
  height: 18px;
  background:
    repeating-linear-gradient(90deg, #777 0 1px, transparent 1px 14px) 0 1px / 100% 2px no-repeat,
    linear-gradient(#262626, #262626) 0 8px / 100% 3px no-repeat;
}

.zooms input::-webkit-slider-thumb {
  appearance: none;
  width: 11px;
  height: 13px;
  border-radius: 6px 6px 2px 2px;
  background: #a9a9a9;
  clip-path: polygon(50% 0, 100% 50%, 100% 100%, 0 100%, 0 50%);
}

.arrange-body {
  flex: 1;
  min-height: 0;
  display: grid;
  grid-template-columns: 326px minmax(0, 1fr) 14px;
}

.track-list {
  display: flex;
  flex-direction: column;
  border-right: 1px solid #000;
  background: #626262;
}

.track-tools {
  flex: none;
  height: 36px;
  display: flex;
  align-items: center;
  gap: 8px;
  padding: 0 8px 2px;
  border-bottom: 1px solid #000;
  background: #545454;
}

.btn.hide {
  font-size: 16px;
}

.push {
  margin-left: auto;
}

.track {
  height: 49px;
  display: flex;
  border-bottom: 1px solid #474747;
  background: #868686;
}

.track-number {
  width: 21px;
  line-height: 50px;
  text-align: center;
  border-right: 1px solid #474747;
}

.track-icon {
  width: 37px;
  height: 28px;
  margin: 11px 9px 0;
  display: flex;
  align-items: center;
  justify-content: center;
  border: 1px solid #1f2b22;
  border-radius: 2px;
  background: #2a3e2f;
}

.track-main {
  padding-top: 5px;
}

.track-name {
  line-height: 18px;
}

.track-controls {
  display: flex;
  align-items: center;
  margin-top: 2px;
}

.track-ms {
  display: flex;
  border: 1px solid #303030;
  border-radius: 3px;
  overflow: hidden;
}

.track-ms button {
  width: 20px;
  height: 16px;
  background: #4e4e4e;
}

.track-ms button + button {
  width: 19px;
  border-left: 1px solid #303030;
}

.rec {
  width: 21px;
  height: 18px;
  margin: 0 11px 0 6px;
  border: 1px solid #7d1d1d;
  border-radius: 3px;
  background: #d02f2f;
}

.rec,
.track-ms button {
  font-size: 12px;
  font-weight: 500;
  line-height: 14px;
}

.track-volume {
  width: 120px;
  height: 12px;
  border-radius: 6px;
  background: linear-gradient(90deg, #363b37 85%, #45403a);
}

.track-volume::-webkit-slider-thumb {
  appearance: none;
  width: 18px;
  height: 18px;
  border: 1px solid #d8d8d8;
  border-radius: 50%;
  background: #929292;
  box-shadow: 0 0 0 1px #444;
}

.track-pan {
  --cap: #b9b9b9;
  width: 28px;
  margin: 10px 0 0 10px;
  display: flex;
  flex-wrap: wrap;
  justify-content: space-between;
  align-content: flex-start;
}

.track-pan span {
  margin: -1px 2px 0;
  font-size: 7px;
  line-height: 7px;
  color: #e0e0e0;
}

.list-foot {
  height: 13px;
  margin-top: auto;
  border-top: 1px solid #000;
  background: #383838;
}

.timeline {
  position: relative;
  display: flex;
  flex-direction: column;
  overflow: hidden;
  background: #2d2d2d;
}

.ruler {
  flex: none;
  height: 36px;
  padding-left: 9px;
  border-bottom: 1px solid #000;
  background: #343434;
  overflow: hidden;
}

.bars {
  height: 18px;
  width: max-content;
  min-width: 100%;
  display: flex;
  border-bottom: 1px solid #1a1a1a;
}

.bars span {
  flex: 0 0 96px;
  padding-left: 4px;
  font-weight: 500;
  line-height: 15px;
  color: #d0d0d0;
  background: linear-gradient(#6a6a6a, #6a6a6a) 0 3px / 1px 100% no-repeat;
}

.bars .cycle {
  background-color: #4a4a4a;
}

.ticks {
  height: 17px;
  background:
    repeating-linear-gradient(90deg, #6a6a6a 0 1px, transparent 1px 96px),
    repeating-linear-gradient(90deg, #606060 0 1px, transparent 1px 48px) 0 2px / 100% 15px no-repeat,
    repeating-linear-gradient(90deg, #5a5a5a 0 1px, transparent 1px 12px) 0 11px / 100% 6px no-repeat;
}

.lane {
  flex: 1;
  padding-left: 10px;
}

.region {
  position: relative;
  height: 48px;
  border-top: 1px solid #111;
  border-radius: 4px 0 0 4px;
  border-bottom: 1px solid #000;
  background: #c3ffcd;
  overflow: hidden;
}

.region-name {
  height: 18px;
  padding-left: 5px;
  line-height: 18px;
  font-size: 11px;
  color: #1f6a2d;
}

.region-midi {
  width: 100%;
  background: #267d35;
  color: #6ab877;
}

.region-midi .first {
  color: #c3ffcd;
}

.notch {
  position: absolute;
  top: 0;
  left: 380px;
}

.notch.second {
  left: 764px;
}

.playhead {
  position: absolute;
  top: 17px;
  bottom: 13px;
  left: 9px;
  width: 1px;
  background: #fff;
}

.playhead svg {
  margin-left: -7px;
}

.h-scroll {
  flex: none;
  height: 13px;
  padding: 3px 3px 0;
  border-top: 1px solid #000;
  background: #383838;
}

.h-thumb {
  width: 151px;
  height: 8px;
  border-radius: 4px;
  background: #737373;
}

.v-scroll {
  border-left: 1px solid #000;
  background: #383838;
}
```
